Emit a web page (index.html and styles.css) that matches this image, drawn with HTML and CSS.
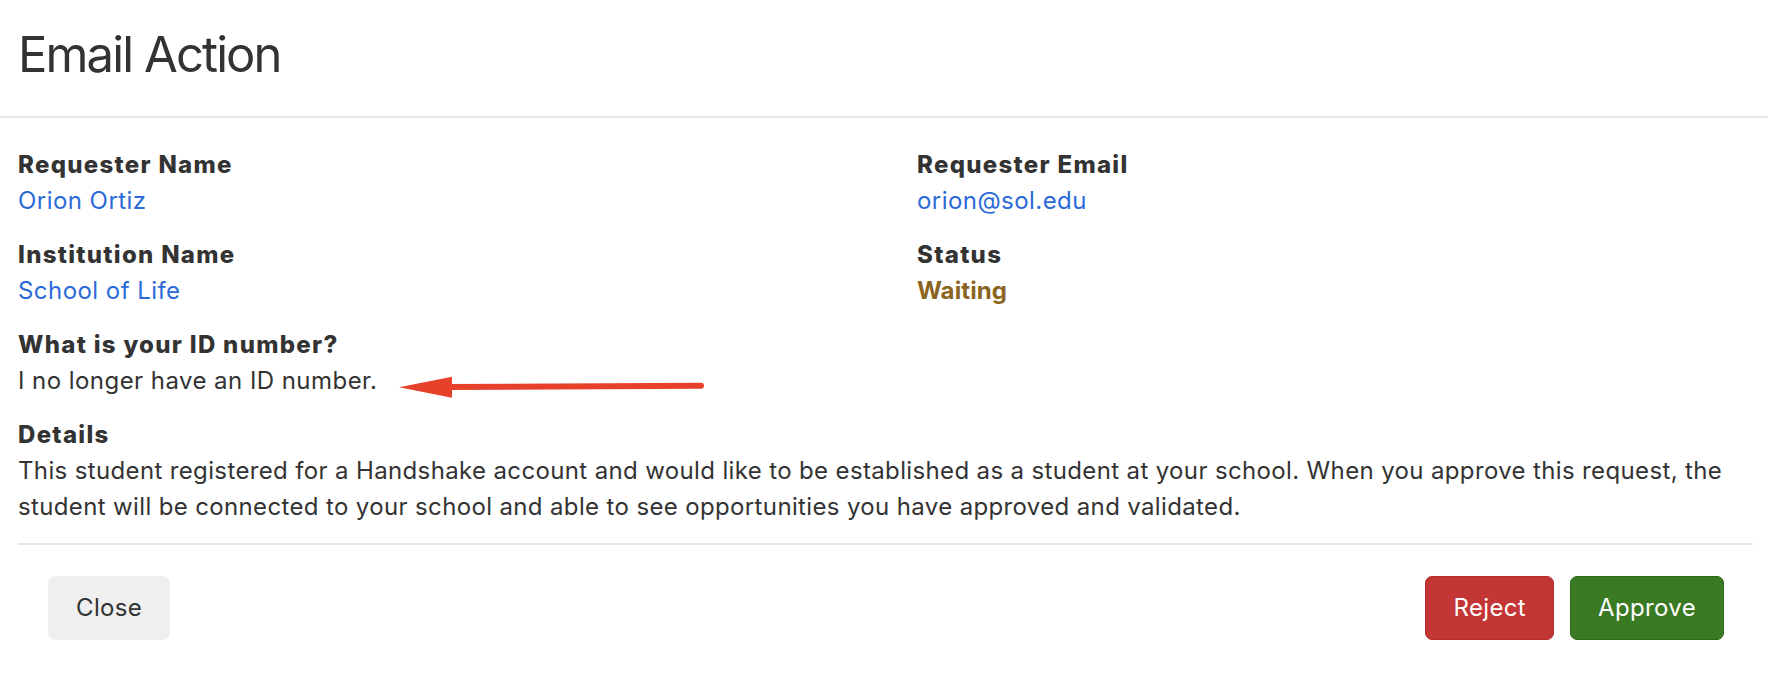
FILE: index.html
```html
<!DOCTYPE html>
<html lang="en">
<head>
<meta charset="utf-8">
<title>Email Action</title>
<link rel="stylesheet" href="styles.css">
</head>
<body>
<div class="modal">
  <header class="modal-header">
    <h1 class="modal-title">Email Action</h1>
  </header>
  <main class="modal-body">
    <div class="grid">
      <div class="field">
        <div class="label">Requester Name</div>
        <div class="value link">Orion Ortiz</div>
      </div>
      <div class="field">
        <div class="label">Requester Email</div>
        <div class="value link">orion@sol.edu</div>
      </div>
      <div class="field">
        <div class="label">Institution Name</div>
        <div class="value link">School of Life</div>
      </div>
      <div class="field">
        <div class="label">Status</div>
        <div class="value status">Waiting</div>
      </div>
    </div>
    <div class="field answer">
      <div class="label">What is your ID number?</div>
      <div class="value">I no longer have an ID number.</div>
      <svg class="arrow" width="330" height="30" viewBox="0 0 330 30" aria-hidden="true">
        <line x1="66" y1="15" x2="321" y2="13.7" stroke="#e8412b" stroke-width="6" stroke-linecap="round"/>
        <polygon points="19,15.3 72,4.7 72,25.7" fill="#e8412b"/>
      </svg>
    </div>
    <div class="field">
      <div class="label">Details</div>
      <p class="value details">This student registered for a Handshake account and would like to be established as a student at your school. When you approve this request, the student will be connected to your school and able to see opportunities you have approved and validated.</p>
    </div>
    <footer class="modal-footer">
      <button class="btn btn-default" type="button">Close</button>
      <div class="actions">
        <button class="btn btn-danger" type="button">Reject</button>
        <button class="btn btn-success" type="button">Approve</button>
      </div>
    </footer>
  </main>
</div>
</body>
</html>
```
FILE: styles.css
```css
html, body {
  margin: 0;
  padding: 0;
  background: #ffffff;
}

body {
  font-family: Inter, "Liberation Sans", Arial, sans-serif;
  color: #333333;
  font-size: 24px;
  line-height: 36px;
}

.modal-header {
  padding: 26px 18px 32px;
  border-bottom: 2px solid #e6e6e6;
}

.modal-title {
  margin: 0;
  font-size: 49px;
  line-height: 58px;
  font-weight: 400;
  letter-spacing: -1.9px;
  color: #333333;
}

.modal-body {
  padding: 29px 15px 0 18px;
}

.grid {
  display: grid;
  grid-template-columns: 899px 1fr;
}

.field {
  margin-bottom: 18px;
}

.label {
  font-weight: 800;
  letter-spacing: 1.3px;
}

.value {
  margin: 0;
  font-weight: 400;
  letter-spacing: 0.45px;
}

.details {
  letter-spacing: 0.36px;
}

.link {
  color: #2b6ad8;
}

.status {
  color: #8a6521;
  font-weight: 700;
  letter-spacing: 0.1px;
}

.answer {
  position: relative;
}

.arrow {
  position: absolute;
  left: 362px;
  top: 45px;
}

.modal-footer {
  border-top: 2px solid #e6e6e6;
  margin-top: 1px;
  padding: 31px 29px 30px 30px;
  display: flex;
  justify-content: space-between;
  align-items: center;
}

.actions {
  display: flex;
  gap: 16px;
}

.btn {
  font-family: Inter, "Liberation Sans", Arial, sans-serif;
  font-size: 24px;
  line-height: 36px;
  letter-spacing: 0.35px;
  height: 64px;
  padding: 0 27px;
  border-radius: 7px;
  border: 1px solid transparent;
  cursor: pointer;
}

.btn-default {
  background: #efefef;
  border-color: #efefef;
  color: #333333;
}

.btn-danger {
  background: #c43535;
  border-color: #b52e2e;
  color: #ffffff;
}

.btn-success {
  background: #3a7a22;
  border-color: #2f681b;
  color: #ffffff;
}
```
